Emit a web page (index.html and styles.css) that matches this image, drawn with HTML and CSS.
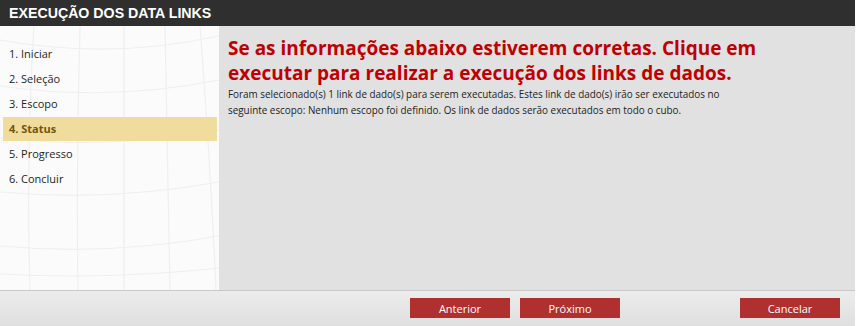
FILE: index.html
```html
<!DOCTYPE html>
<html lang="pt">
<head>
<meta charset="utf-8">
<link rel="stylesheet" href="styles.css">
</head>
<body>
<div class="dialog">
  <div class="titlebar">EXECUÇÃO DOS DATA LINKS</div>
  <div class="main">
    <div class="sidebar">
      <svg class="grid" width="219" height="264" viewBox="0 0 219 264" preserveAspectRatio="none">
        <g fill="none" stroke="#efefef" stroke-width="1.2">
          <path d="M0 14 Q110 34 219 10"/>
          <path d="M0 60 Q110 76 219 54"/>
          <path d="M0 112 Q110 124 219 104"/>
          <path d="M0 166 Q110 176 219 156"/>
          <path d="M0 220 Q110 230 219 210"/>
          <path d="M0 248 Q110 254 219 242"/>
          <path d="M34 0 Q26 130 30 264"/>
          <path d="M80 0 Q76 130 78 264"/>
          <path d="M124 0 Q124 130 124 264"/>
          <path d="M165 0 Q168 130 170 264"/>
          <path d="M200 0 Q210 130 216 264"/>
        </g>
      </svg>
      <ul class="steps">
        <li class="step">1. Iniciar</li>
        <li class="step">2. Seleção</li>
        <li class="step">3. Escopo</li>
        <li class="step active">4. Status</li>
        <li class="step">5. Progresso</li>
        <li class="step">6. Concluir</li>
      </ul>
    </div>
    <div class="content">
      <h1 class="headline">Se as informações abaixo estiverem corretas. Clique em executar para realizar a execução dos links de dados.</h1>
      <p class="desc">Foram selecionado(s) 1 link de dado(s) para serem executadas. Estes link de dado(s) irão ser executados no seguinte escopo: Nenhum escopo foi definido. Os link de dados serão executados em todo o cubo.</p>
    </div>
  </div>
  <div class="footer">
    <button class="btn">Anterior</button>
    <button class="btn">Próximo</button>
    <span class="spacer"></span>
    <button class="btn">Cancelar</button>
  </div>
</div>
</body>
</html>
```
FILE: styles.css
```css
html, body {
  margin: 0;
  padding: 0;
  background: #ffffff;
}
.dialog {
  width: 855px;
  height: 326px;
  display: flex;
  flex-direction: column;
  font-family: "Open Sans", "DejaVu Sans", sans-serif;
}
.titlebar {
  height: 26px;
  background: #2f2f2f;
  color: #ffffff;
  font-family: "Liberation Sans", Arial, sans-serif;
  font-weight: bold;
  font-size: 14.2px;
  line-height: 26px;
  padding-left: 9px;
  flex: none;
}
.main {
  display: flex;
  height: 264px;
  flex: none;
}
.sidebar {
  width: 219px;
  position: relative;
  background: #fbfbfb;
  flex: none;
}
.grid {
  position: absolute;
  left: 0;
  top: 0;
}
.steps {
  position: relative;
  list-style: none;
  margin: 0;
  padding: 16px 0 0 3px;
}
.step {
  width: 214px;
  height: 25px;
  line-height: 24px;
  font-size: 11px;
  color: #1e1e1e;
  padding-left: 6px;
  box-sizing: border-box;
}
.step.active {
  background: #f0dc9c;
  color: #6e5612;
  font-weight: bold;
  height: 24px;
  margin-bottom: 1px;
}
.content {
  flex: 1;
  background: #e1e1e1;
  padding: 10px 9px 0 9px;
}
.headline {
  margin: 0;
  color: #c00000;
  font-size: 19px;
  font-weight: bold;
  line-height: 25px;
  width: 540px;
}
.desc {
  margin: 0;
  font-size: 9.9px;
  line-height: 16px;
  color: #222222;
  width: 522px;
}
.footer {
  height: 36px;
  flex: none;
  border-top: 1px solid #c8c8c8;
  background: linear-gradient(#ececec, #dfdfdf);
  display: flex;
  align-items: flex-start;
  padding: 7px 15px 0 410px;
  box-sizing: border-box;
  gap: 10px;
}
.spacer {
  width: 100px;
}
.btn {
  width: 100px;
  height: 20px;
  border: none;
  background: #b03030;
  color: #ffffff;
  font-family: "Open Sans", "DejaVu Sans", sans-serif;
  font-size: 11px;
  padding: 0;
}
```
